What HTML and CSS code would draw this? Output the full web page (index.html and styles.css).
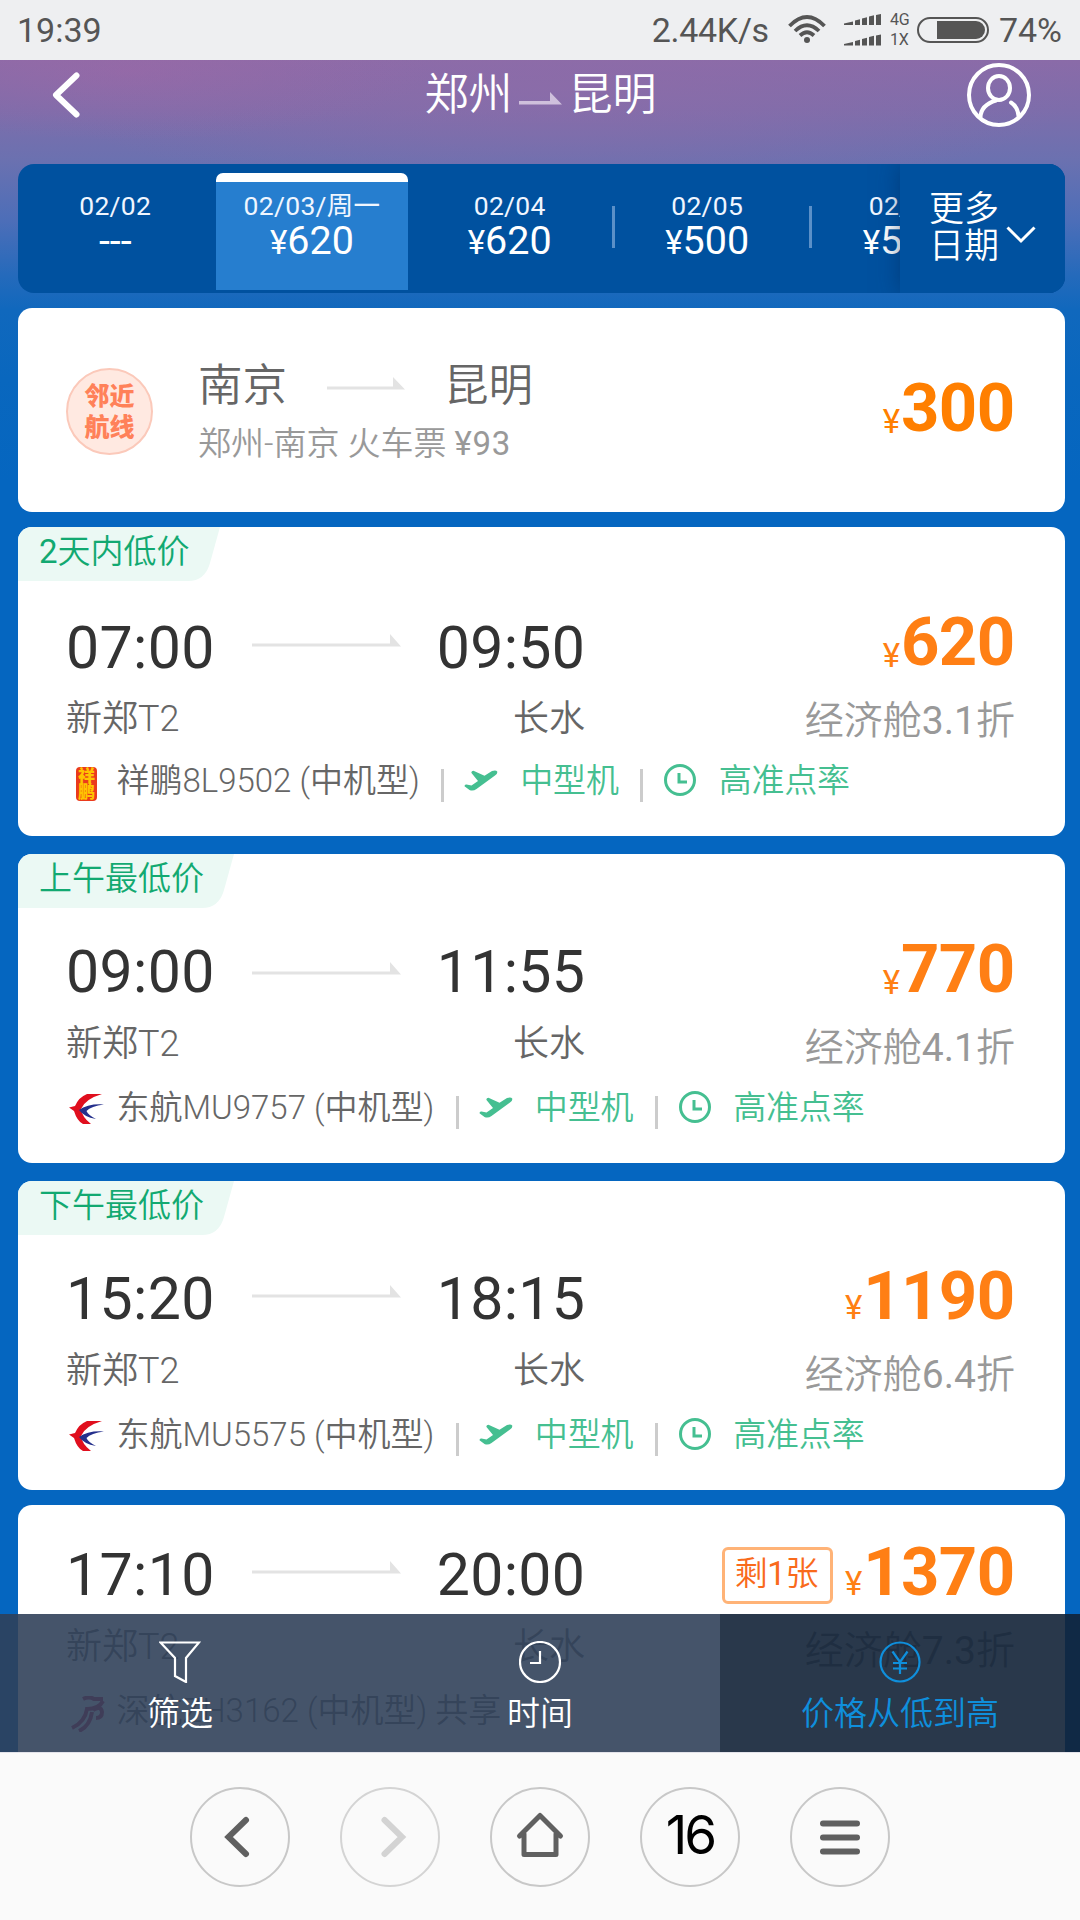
FILE: index.html
```html
<!DOCTYPE html>
<html lang="zh-CN">
<head>
<meta charset="utf-8">
<title>郑州 - 昆明 机票</title>
<link rel="stylesheet" href="styles.css">
</head>
<body>
<svg class="defs" width="0" height="0">
  <symbol id="arrow" viewBox="0 0 149 13"><path d="M0 9.500H138V0L149 12.500H0Z"/></symbol>
  <symbol id="plane" viewBox="0 0 34 21"><path d="M.5 16.300Q.5 14.300 2.500 14.600L7.500 15.600L14 11L7.300 2.800Q7.500 .6 10 .9L20.500 5.800L28 1Q32 -.3 33.200 1.500Q33.800 3.500 31 5.500L12.500 19Q9 21.500 5.500 20Z"/></symbol>
  <symbol id="clock" viewBox="0 0 34 34"><circle cx="17" cy="17" r="14.500"/><path d="M16 10v9h8"/></symbol>
  <symbol id="mu" viewBox="0 0 36 32"><path fill="#e00f1e" d="M33 1H18Q10 4 6 13L0 14.500L5 18Q8 28 14 31H22Q13 24 12 16Q16 6 33 1Z"/><path fill="#25308c" d="M35 11.500Q19 10.500 10 17Q15 24 27 26Q19 22 17.500 18Q22 13 35 11.500Z"/></symbol>
</svg>
<div class="screen">
  <div class="status">
    <span class="clock-text">19:39</span>
    <div class="status-right">
      <span class="rate">2.44K/s</span>
      <svg class="wifi" width="38" height="28" viewBox="0 0 38 28"><g fill="none" stroke="#555" stroke-width="3.800"><path d="M1.500 11Q19-7 36.500 11"/><path d="M7 16Q19 4.500 31 16"/><path d="M12 20.500Q19 14 26 20.500"/></g><circle cx="19" cy="25" r="3"/></svg>
      <svg class="signal" width="37" height="32" viewBox="0 0 37 32"><path id="bars" d="M0 11V9.500L9 7.500V11ZM11 6.500l5-1.200V11h-5ZM18 4.500l5-1.200V11h-5ZM25 2.500l5-1.200V11h-5ZM32 1l5-1V11h-5Z"/><use href="#bars" y="20.500"/></svg>
      <div class="net"><span>4G</span><span>1X</span></div>
      <div class="battery"><i></i></div>
      <span class="percent">74%</span>
    </div>
  </div>

  <div class="page">
    <header class="header">
      <svg class="back" width="28" height="46" viewBox="0 0 28 46"><path d="M24.500 3.500L4 23L24.500 42.500"/></svg>
      <h1><span>郑州</span><svg width="43" height="13" viewBox="0 0 43 13"><path d="M0 9H31V0L43 12.500H0Z"/></svg><span>昆明</span></h1>
      <svg class="user" width="66" height="66" viewBox="0 0 66 66"><circle cx="33" cy="33" r="30"/><ellipse cx="33" cy="26" rx="11" ry="12"/><path d="M14.500 55Q15 43 30 38.500M45 40.500Q52 45 52.500 54"/></svg>
    </header>

    <nav class="dates">
      <div class="date-list">
        <div class="date"><span>02/02</span><b>---</b></div>
        <div class="date active"><span>02/03/周一</span><b><small>¥</small>620</b></div>
        <div class="date"><span>02/04</span><b><small>¥</small>620</b></div>
        <div class="date split"><span>02/05</span><b><small>¥</small>500</b></div>
        <div class="date split"><span>02/06</span><b><small>¥</small>550</b></div>
      </div>
      <div class="more"><span>更多<br>日期</span><svg width="30" height="18" viewBox="0 0 30 18"><path d="M1.500 1.500L15 15L28.500 1.500"/></svg></div>
    </nav>

    <section class="card nearby">
      <div class="stamp">邻近<br>航线</div>
      <div class="nearby-info">
        <div class="route"><span>南京</span><svg width="78" height="13" viewBox="0 0 78 13"><path d="M0 9.500H66V0L78 12.500H0Z"/></svg><span>昆明</span></div>
        <div class="train">郑州-南京 火车票 <b>¥93</b></div>
      </div>
      <div class="price low"><small>¥</small>300</div>
    </section>

    <section class="card flight first">
      <div class="tag short"><svg viewBox="0 0 202 54" preserveAspectRatio="none"><path d="M0 0H202L192 36Q187 54 170 54H0Z"/></svg><span><b>2</b>天内低价</span></div>
      <div class="main">
        <div class="legs">
          <div class="times"><span>07:00</span><svg><use href="#arrow"/></svg><span>09:50</span></div>
          <div class="ports"><span>新郑T2</span><span>长水</span></div>
        </div>
        <div class="fare"><div class="price low"><small>¥</small>620</div><div class="cabin">经济舱<b>3.1</b>折</div></div>
      </div>
      <div class="meta">
        <svg class="logo" viewBox="0 0 36 36"><rect x="7" y="1" width="21" height="34" rx="4" fill="#ea3a1c"/><g fill="#ffc400" font-size="17" font-weight="900" text-anchor="middle"><text x="17.500" y="15.500">祥</text><text x="17.500" y="32">鹏</text></g></svg>
        <span class="no">祥鹏8L9502 (中机型)</span><i></i><svg class="plane"><use href="#plane"/></svg><em>中型机</em><i></i><svg class="clk"><use href="#clock"/></svg><em>高准点率</em>
      </div>
    </section>

    <section class="card flight">
      <div class="tag"><svg viewBox="0 0 216 54" preserveAspectRatio="none"><path d="M0 0H216L206 36Q201 54 184 54H0Z"/></svg><span>上午最低价</span></div>
      <div class="main">
        <div class="legs">
          <div class="times"><span>09:00</span><svg><use href="#arrow"/></svg><span>11:55</span></div>
          <div class="ports"><span>新郑T2</span><span>长水</span></div>
        </div>
        <div class="fare"><div class="price low"><small>¥</small>770</div><div class="cabin">经济舱<b>4.1</b>折</div></div>
      </div>
      <div class="meta">
        <svg class="logo"><use href="#mu" y="-2"/></svg>
        <span class="no">东航MU9757 (中机型)</span><i></i><svg class="plane"><use href="#plane"/></svg><em>中型机</em><i></i><svg class="clk"><use href="#clock"/></svg><em>高准点率</em>
      </div>
    </section>

    <section class="card flight raised">
      <div class="tag"><svg viewBox="0 0 216 54" preserveAspectRatio="none"><path d="M0 0H216L206 36Q201 54 184 54H0Z"/></svg><span>下午最低价</span></div>
      <div class="main">
        <div class="legs">
          <div class="times"><span>15:20</span><svg><use href="#arrow"/></svg><span>18:15</span></div>
          <div class="ports"><span>新郑T2</span><span>长水</span></div>
        </div>
        <div class="fare"><div class="price"><small>¥</small>1190</div><div class="cabin">经济舱<b>6.4</b>折</div></div>
      </div>
      <div class="meta">
        <svg class="logo"><use href="#mu" y="-2"/></svg>
        <span class="no">东航MU5575 (中机型)</span><i></i><svg class="plane"><use href="#plane"/></svg><em>中型机</em><i></i><svg class="clk"><use href="#clock"/></svg><em>高准点率</em>
      </div>
    </section>

    <section class="card flight raised plain">
      <div class="main">
        <div class="legs">
          <div class="times"><span>17:10</span><svg><use href="#arrow"/></svg><span>20:00</span></div>
          <div class="ports"><span>新郑T2</span><span>长水</span></div>
        </div>
        <div class="fare"><div class="fare-top"><span class="left">剩<b>1</b>张</span><div class="price"><small>¥</small>1370</div></div><div class="cabin">经济舱<b>7.3</b>折</div></div>
      </div>
      <div class="meta">
        <svg class="logo" viewBox="0 0 36 36"><g fill="none" stroke="#c8265a" stroke-width="4"><path d="M14 3Q20 0 25 3H34"/><path d="M34 5Q30 13 18 13Q16 26 3 32"/><path d="M24 14Q32 9 33 16Q33 22 27 22"/><path d="M23 16Q21 30 10 35"/></g></svg>
        <span class="no">深航ZH3162 (中机型) 共享</span>
      </div>
    </section>

    <div class="filters">
      <div><svg width="42" height="42" viewBox="0 0 42 42"><path d="M1.500 1.500H40L27 17V41L16 35V17Z"/></svg><span>筛选</span></div>
      <div><svg width="42" height="42" viewBox="0 0 42 42"><circle cx="21" cy="21" r="20"/><path d="M21 10V22H11"/></svg><span>时间</span></div>
      <div class="on"><svg width="42" height="42" viewBox="0 0 42 42"><circle cx="21" cy="21" r="19.500"/><path d="M13.500 10.500L21 21L28.500 10.500M21 21V33M14 22H28M14 27.500H28"/></svg><span>价格从低到高</span></div>
    </div>
  </div>

  <div class="browser">
    <span class="btn"><svg viewBox="0 0 96 96"><path d="M54 31L36.500 48L54 65"/></svg></span>
    <span class="btn off"><svg viewBox="0 0 96 96"><path d="M42.500 31L60 48L42.500 65"/></svg></span>
    <span class="btn"><svg viewBox="0 0 96 96"><path class="thin" d="M27.500 47L48 26.500L68.500 47M32 45V65.500H64V45"/></svg></span>
    <span class="btn tabs">16</span>
    <span class="btn"><svg viewBox="0 0 96 96"><path d="M31 34.500H65M31 48.500H65M31 62.500H65"/></svg></span>
  </div>
</div>
</body>
</html>
```

FILE: styles.css
```css
* { box-sizing: border-box; }

body {
  margin: 0;
  font-family: Roboto, "Noto Sans CJK SC", sans-serif;
}

.defs { position: absolute; }

.screen {
  width: 1080px;
  height: 1920px;
  display: flex;
  flex-direction: column;
  overflow: hidden;
}

svg { display: block; flex: none; }

/* system status bar */
.status {
  height: 60px;
  flex: none;
  display: flex;
  align-items: center;
  justify-content: space-between;
  padding: 0 18px 0 17px;
  background: #eeeff1;
  color: #555;
  font-size: 34px;
  line-height: 60px;
}

.status-right { display: flex; align-items: center; }
.clock-text { letter-spacing: 0; }
.rate { margin-right: 19px; letter-spacing: -.3px; }
.wifi { fill: #555; margin-right: 18px; margin-top: -2px; }
.signal { fill: #555; margin-right: 9px; }

.net {
  width: 21px;
  display: flex;
  flex-direction: column;
  gap: 2px;
  margin-right: 6px;
  font-size: 16px;
  line-height: 18px;
}

.battery {
  width: 72px;
  height: 26px;
  border: 2px solid #555;
  border-radius: 13px;
  padding: 2px 2px 2px 18px;
  margin-right: 10px;
}

.battery i {
  display: block;
  height: 18px;
  background: #555;
  border-radius: 0 9px 9px 0;
}

/* ticket page */
.page {
  position: relative;
  height: 1692px;
  flex: none;
  padding: 0 15px 0 18px;
  overflow: hidden;
  background:
    radial-gradient(ellipse 300px 70px at 130px 10px, rgba(160, 104, 166, .5), transparent),
    radial-gradient(ellipse 520px 110px at 560px 30px, rgba(144, 108, 168, .6), transparent),
    linear-gradient(#8a6ba8 0, #7d6dab 50px, #6b71b0 100px, #4d6eb8 160px, #256abb 215px, #1068bd 250px, #0967be 320px, #0566c0 420px);
}

.header {
  height: 104px;
  display: flex;
  align-items: flex-start;
  justify-content: space-between;
  padding: 0 33px 0 34px;
}

.back { margin-top: 12px; fill: none; stroke: #fff; stroke-width: 6; stroke-linecap: round; stroke-linejoin: round; }

.header h1 {
  margin: 0 0 0 35px;
  display: flex;
  gap: 6.500px;
  color: #fff;
  font-size: 44px;
  line-height: 71px;
  font-weight: 350;
}

.header h1 svg { margin-top: 32px; fill: #cfc0dc; }
.user { margin-top: 2px; fill: none; stroke: #fff; stroke-width: 4; stroke-linecap: round; }

/* date strip */
.dates {
  display: flex;
  height: 129px;
  margin-bottom: 15px;
  border-radius: 16px;
  overflow: hidden;
  background: #00519f;
  color: #fff;
}

.date-list {
  width: 882px;
  display: flex;
  overflow: hidden;
  padding-top: 9px;
}

.date {
  width: 197.500px;
  flex: none;
  height: 117px;
  display: flex;
  flex-direction: column;
  align-items: center;
  padding-top: 17px;
  position: relative;
  color: #f0f6ff;
}

.date:first-child { padding-right: 3px; }
.date span { font-size: 26.500px; line-height: 32px; letter-spacing: .3px; white-space: nowrap; font-weight: 400; }
.date b { font-size: 39.500px; line-height: 38px; font-weight: 400; color: #fff; }
.date small { font-size: 33px; }

.date.active {
  width: 192px;
  margin: 0 3px 0 .5px;
  padding-top: 8px;
  border-top: 9px solid #fff;
  border-radius: 7px 7px 0 0;
  background: #267ecf;
}

.split::before {
  content: "";
  position: absolute;
  left: 3px;
  top: 33px;
  width: 3px;
  height: 42px;
  background: #5b90c8;
}

.more {
  flex: 1;
  display: flex;
  gap: 7px;
  padding: 27px 0 0 29px;
  background: #00519f;
  box-shadow: 0 0 22px rgba(0, 40, 90, .5);
  font-size: 35px;
  line-height: 37px;
  font-weight: 350;
  z-index: 1;
}

.more svg { margin-top: 35px; fill: none; stroke: #fff; stroke-width: 3; }

/* cards */
.card { background: #fff; border-radius: 14px; overflow: hidden; position: relative; }

.price {
  color: #ff7f14;
  font-size: 67px;
  line-height: 60px;
  font-weight: 700;
  text-align: right;
  white-space: nowrap;
  letter-spacing: -.6px;
  padding-right: .5px;
}

.price small { font-size: 33px; font-weight: 400; margin-right: 1.500px; }
.price.low small { position: relative; top: 2px; }

.nearby {
  height: 204px;
  margin-bottom: 15px;
  display: flex;
  padding: 0 50px 0 48px;
}

.stamp {
  width: 87px;
  height: 87px;
  margin-top: 60px;
  padding-top: 11px;
  border-radius: 50%;
  border: 2px solid #fbc9ba;
  background: #ffe9e1;
  color: #ff8159;
  text-align: center;
  font-size: 25px;
  line-height: 31px;
  font-weight: 900;
}

.nearby-info { margin-left: 45px; padding-top: 48px; flex: 1; }

.route {
  display: flex;
  color: #666;
  font-size: 44.500px;
  line-height: 60px;
  font-weight: 350;
}

.route svg { margin: 21px 39px 0 40px; fill: #e3e3e3; }
.train { font-size: 33px; line-height: 44px; margin-top: 6px; color: #999; font-weight: 350; }
.train b { font-weight: 400; letter-spacing: .6px; }
.nearby .price { padding-top: 70px; color: #ff7f00; }

.flight { height: 309px; margin-bottom: 18px; padding: 85px 50px 0 48px; --arrow: 19.500px; }
.flight.raised { --arrow: 16px; margin-bottom: 15px; }
.flight.plain { padding-top: 37px; height: 261px; }

.tag { position: absolute; left: 0; top: 0; width: 216px; height: 54px; }
.tag.short { width: 202px; }
.tag svg { position: absolute; inset: 0; width: 100%; height: 100%; fill: #ebf9f4; }
.tag span { position: relative; display: block; padding-left: 21px; font-size: 33px; line-height: 50px; color: #12a971; font-weight: 350; white-space: nowrap; }
.tag b, .left b { font-weight: 400; }

.main { height: 149px; display: flex; justify-content: space-between; }
.legs { width: 519px; padding-top: 3px; }
.flight.first .legs { padding-top: 5.500px; }
.flight.first { --arrow: 16.500px; }

.times {
  display: flex;
  color: #333;
  font-size: 59px;
  line-height: 60px;
  letter-spacing: .35px;
}

.times span { width: 149px; }
.times svg { width: 149px; height: 13px; margin: var(--arrow) 36px 0 37px; fill: #e3e3e3; }

.ports {
  margin-top: 19.500px;
  display: flex;
  justify-content: space-between;
  font-size: 36px;
  line-height: 44px;
  color: #666;
  font-weight: 350;
}

.cabin { margin-top: 15px; font-size: 39px; line-height: 44px; color: #999; font-weight: 350; text-align: right; }
.cabin b { font-weight: 400; }

.fare-top { display: flex; justify-content: flex-end; }

.left {
  width: 111px;
  height: 57px;
  margin: 5px 11.500px 0 0;
  border: 3px solid #ffb377;
  border-radius: 6px;
  color: #f96a1b;
  font-size: 33px;
  line-height: 48px;
  font-weight: 350;
  text-align: center;
  letter-spacing: -.5px;
  padding-right: 3px;
}

.meta {
  display: flex;
  height: 42px;
  font-size: 33px;
  line-height: 40px;
  color: #666;
  font-weight: 350;
  white-space: nowrap;
}

.logo { width: 36px; height: 36px; margin: 5px 11.500px 0 3px; }
.meta i { width: 3px; height: 33px; margin: 8px 20px 0 21.500px; background: #ccc; }
.meta em { font-style: normal; color: #45bf91; letter-spacing: -.2px; }
.plane { width: 34px; height: 21px; margin: 9px 22px 0 0; fill: #45bf91; }
.clk { width: 34px; height: 34px; margin: 2px 21.500px 0 0; fill: none; stroke: #45bf91; stroke-width: 3; }

/* sort and filter bar laid over the list */
.filters {
  position: absolute;
  left: 0;
  right: 0;
  bottom: 0;
  height: 138px;
  display: grid;
  grid-template-columns: repeat(3, 1fr);
  color: #fff;
  font-size: 33px;
  line-height: 40px;
}

.filters div {
  display: flex;
  flex-direction: column;
  align-items: center;
  gap: 11px;
  padding-top: 27px;
  background: rgba(47, 64, 88, .894);
}

.filters svg { fill: none; stroke: currentColor; stroke-width: 2.200; }
.filters .on { background: rgba(18, 34, 55, .9); color: #0f8fdc; }
.filters span { font-weight: 350; }

/* browser toolbar */
.browser {
  flex: 1;
  display: flex;
  justify-content: center;
  gap: 50px;
  padding-top: 34px;
  border-top: 1px solid #e3e3ea;
  background: #fafafa;
}

.btn {
  width: 100px;
  height: 100px;
  border: 2px solid #c8c8c8;
  border-radius: 50%;
}

.btn svg { width: 96px; height: 96px; fill: none; stroke: #606060; stroke-width: 6; stroke-linecap: round; stroke-linejoin: miter; }
.btn .thin { stroke-width: 5; stroke-linejoin: round; }
.btn.off { border-color: #d4d4d4; }
.btn.off svg { stroke: #d3d3d3; }

.tabs {
  font-family: Inter, Roboto, sans-serif;
  font-size: 53px;
  line-height: 93px;
  letter-spacing: -3px;
  text-align: center;
  color: #000;
}
```
